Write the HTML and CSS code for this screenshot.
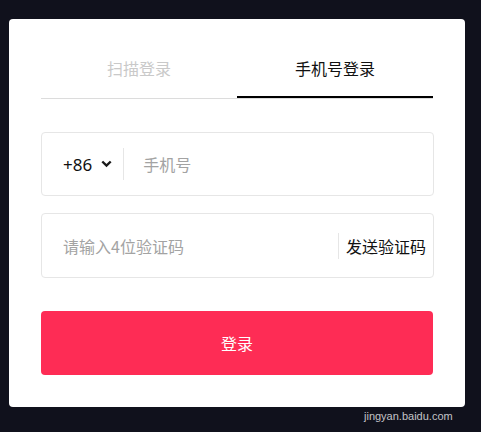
FILE: index.html
```html
<!DOCTYPE html>
<html lang="zh-CN">
<head>
<meta charset="utf-8">
<link rel="stylesheet" href="styles.css">
</head>
<body>
<div class="card">
  <div class="tabs">
    <div class="tab">扫描登录</div>
    <div class="tab active">手机号登录</div>
  </div>
  <div class="field phone">
    <div class="code">+86
      <svg class="chev" width="11" height="8" viewBox="0 0 11 8"><path d="M1.3 1.5 L5.5 5.6 L9.7 1.5" fill="none" stroke="#1a1a1a" stroke-width="2.4"/></svg>
    </div>
    <div class="sep"></div>
    <div class="ph">手机号</div>
  </div>
  <div class="field verify">
    <div class="ph grow">请输入4位验证码</div>
    <div class="sep short"></div>
    <div class="send">发送验证码</div>
  </div>
  <div class="btn">登录</div>
</div>
<div class="wm">jingyan.baidu.com</div>
</body>
</html>
```
FILE: styles.css
```css
html, body {
  margin: 0;
  padding: 0;
  background: #10111c;
  font-family: "Noto Sans CJK SC", "Liberation Sans", sans-serif;
}
body {
  padding: 19px 0 0 9px;
  position: relative;
  height: 432px;
  box-sizing: border-box;
}
.card {
  width: 456px;
  height: 388px;
  box-sizing: border-box;
  background: #fff;
  border-radius: 4px;
  padding: 24px 32px 0 32px;
}
.tabs {
  display: flex;
  border-bottom: 1px solid #dcdcdc;
}
.tab {
  flex: 1;
  text-align: center;
  font-size: 16px;
  line-height: 24px;
  padding: 13px 0 16px;
  border-bottom: 2px solid transparent;
  color: #c9c9c9;
}
.tab.active {
  color: #111;
  border-bottom-color: #000;
}
.field {
  height: 64px;
  box-sizing: border-box;
  border: 1px solid #e6e6e6;
  border-radius: 4px;
  display: flex;
  align-items: center;
  margin: 33px -1px 0 0;
  padding: 0 0 0 21px;
}
.verify {
  margin-top: 17px;
  height: 65px;
  padding-right: 7px;
}
.code {
  font-size: 17px;
  color: #111;
  display: flex;
  align-items: center;
  font-family: "Noto Sans", "Liberation Sans", sans-serif;
}
.chev {
  margin-left: 9px;
}
.sep {
  width: 1px;
  height: 32px;
  background: #e6e6e6;
  margin: 0 19px 0 11px;
}
.sep.short {
  height: 26px;
  margin: 0 7px 0 0;
}
.ph {
  font-size: 16px;
  color: #a3a3a3;
}
.grow {
  flex: 1;
}
.send {
  font-size: 16px;
  color: #111;
}
.btn {
  margin-top: 33px;
  height: 64px;
  background: #fe2c55;
  border-radius: 4px;
  color: #fff;
  font-size: 16px;
  display: flex;
  align-items: center;
  justify-content: center;
}
.wm {
  position: absolute;
  left: 364px;
  top: 410px;
  font-size: 11px;
  color: #c4c4c8;
  font-family: "Liberation Sans", sans-serif;
}
```
